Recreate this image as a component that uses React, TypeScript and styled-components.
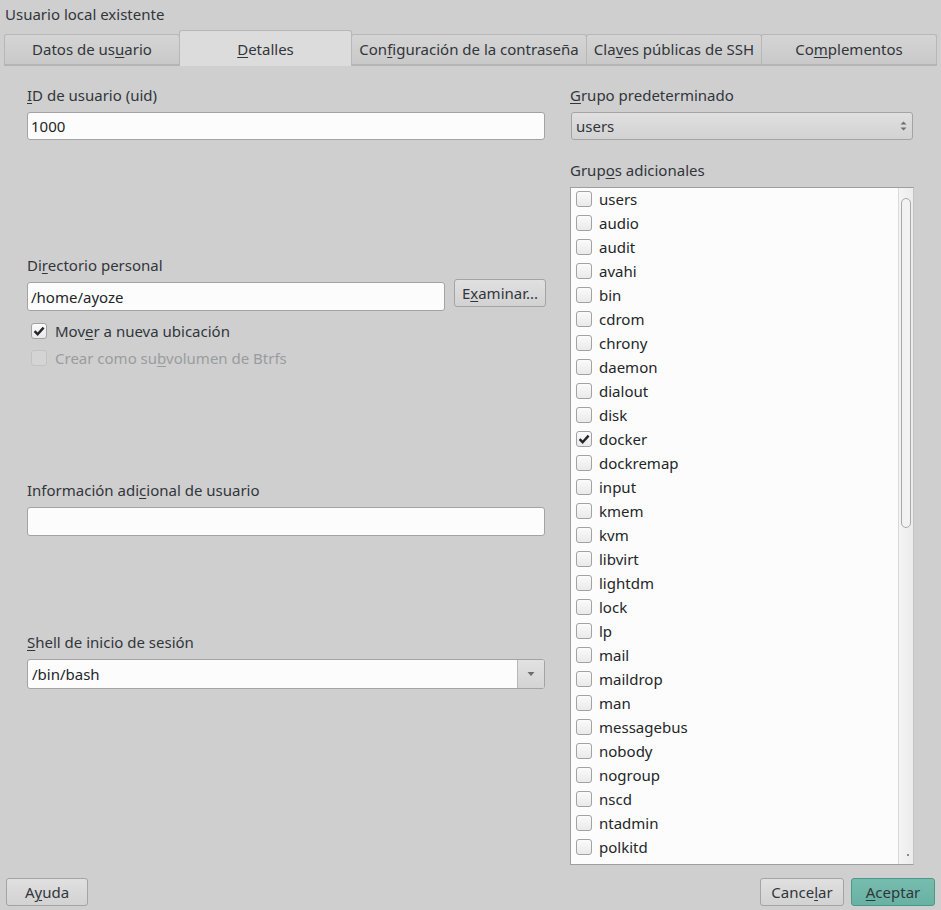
import React from 'react'
import styled, { createGlobalStyle } from 'styled-components'

const GlobalStyle = createGlobalStyle`
  html, body {
    margin: 0;
    padding: 0;
    background: #cfcfcf;
  }
  body {
    font-family: 'Noto Sans', 'Open Sans', sans-serif;
    font-size: 15px;
    color: #31363b;
  }
  * {
    box-sizing: border-box;
  }
`

const tabs = [
  { label: ['Datos de us', 'u', 'ario'], width: 176 },
  { label: ['', 'D', 'etalles'], width: 173, active: true },
  { label: ['Con', 'f', 'iguración de la contraseña'], width: 236 },
  { label: ['Cla', 'v', 'es públicas de SSH'], width: 176 },
  { label: ['Co', 'm', 'plementos'], width: 176 },
]

const groups = [
  'users', 'audio', 'audit', 'avahi', 'bin', 'cdrom', 'chrony', 'daemon',
  'dialout', 'disk', 'docker', 'dockremap', 'input', 'kmem', 'kvm', 'libvirt',
  'lightdm', 'lock', 'lp', 'mail', 'maildrop', 'man', 'messagebus', 'nobody',
  'nogroup', 'nscd', 'ntadmin', 'polkitd',
]

const checkMark = (
  <svg width="12" height="12" viewBox="0 0 12 12">
    <path d="M1.6 6.2 L4.6 9.2 L10.6 2.6" fill="none" stroke="#232629" strokeWidth="2.4" />
  </svg>
)

function Mn({ parts }: { parts: string[] }) {
  return (
    <>
      {parts[0]}
      <u>{parts[1]}</u>
      {parts[2]}
    </>
  )
}

function App() {
  return (
    <Window>
      <GlobalStyle />
      <Title>Usuario local existente</Title>
      <TabBar>
        {tabs.map((t) => (
          <Tab key={t.width + t.label[2]} $width={t.width} $active={!!t.active}>
            <Mn parts={t.label} />
          </Tab>
        ))}
      </TabBar>
      <Content>
        <LeftColumn>
          <Label $top={19}>
            <Mn parts={['', 'I', 'D de usuario (uid)']} />
          </Label>
          <TextInput $height={28}>1000</TextInput>

          <Label $top={115}>
            <Mn parts={['Di', 'r', 'ectorio personal']} />
          </Label>
          <InputRow>
            <TextInput $height={29} $grow>/home/ayoze</TextInput>
            <PushButton $width={92} $lift>
              <Mn parts={['E', 'x', 'aminar...']} />
            </PushButton>
          </InputRow>
          <CheckRow $top={10}>
            <CheckBox $checked>{checkMark}</CheckBox>
            <span>
              <Mn parts={['Mov', 'e', 'r a nueva ubicación']} />
            </span>
          </CheckRow>
          <CheckRow $top={7} $disabled>
            <CheckBox $disabled />
            <span>
              <Mn parts={['Crear como su', 'b', 'volumen de Btrfs']} />
            </span>
          </CheckRow>

          <Label $top={112}>
            <Mn parts={['Información adi', 'c', 'ional de usuario']} />
          </Label>
          <TextInput $height={29} />

          <Label $top={96}>
            <Mn parts={['', 'S', 'hell de inicio de sesión']} />
          </Label>
          <ComboEdit>
            <ComboText>/bin/bash</ComboText>
            <ComboArrow>
              <svg width="8" height="6" viewBox="0 0 8 6">
                <path d="M0.5 1 L7.5 1 L4 5 Z" fill="#6a6e72" />
              </svg>
            </ComboArrow>
          </ComboEdit>
        </LeftColumn>

        <RightColumn>
          <Label $top={19}>
            <Mn parts={['', 'G', 'rupo predeterminado']} />
          </Label>
          <SelectBox>
            <span>users</span>
            <svg width="7" height="12" viewBox="0 0 7 12">
              <path d="M0.5 4.5 L3.5 1.5 L6.5 4.5 Z" fill="#6a6e72" />
              <path d="M0.5 7.5 L3.5 10.5 L6.5 7.5 Z" fill="#6a6e72" />
            </svg>
          </SelectBox>
          <Label $top={20}>
            <Mn parts={['Grup', 'o', 's adicionales']} />
          </Label>
          <ListBox>
            <ListItems>
              {groups.map((g) => (
                <ListRow key={g}>
                  <CheckBox $checked={g === 'docker'}>
                    {g === 'docker' && checkMark}
                  </CheckBox>
                  <span>{g}</span>
                </ListRow>
              ))}
            </ListItems>
            <ScrollTrack>
              <ScrollThumb />
              <Grip />
            </ScrollTrack>
          </ListBox>
        </RightColumn>
      </Content>
      <Footer>
        <PushButton $width={82}>
          <Mn parts={['A', 'y', 'uda']} />
        </PushButton>
        <FooterRight>
          <PushButton $width={84}>
            <Mn parts={['Cance', 'l', 'ar']} />
          </PushButton>
          <PushButton $width={84} $primary>
            <Mn parts={['', 'A', 'ceptar']} />
          </PushButton>
        </FooterRight>
      </Footer>
    </Window>
  )
}

const Window = styled.div`
  width: 941px;
  height: 910px;
  display: flex;
  flex-direction: column;
  background: #cfcfcf;
  overflow: hidden;
  u {
    text-decoration-thickness: 1px;
    text-underline-offset: 2px;
  }
`

const Title = styled.div`
  height: 31px;
  padding: 4px 0 0 5px;
  line-height: 20px;
  color: #31363b;
`

const TabBar = styled.div`
  display: flex;
  align-items: flex-end;
  height: 35px;
  margin: 0 4px 0 4px;
  border-bottom: 1px solid #b4b4b4;
`

const Tab = styled.div<{ $width: number; $active: boolean }>`
  width: ${(p) => p.$width}px;
  height: ${(p) => (p.$active ? 36 : 31)}px;
  margin-bottom: ${(p) => (p.$active ? -1 : 0)}px;
  display: flex;
  align-items: center;
  justify-content: center;
  padding-bottom: ${(p) => (p.$active ? 0 : 1)}px;
  white-space: nowrap;
  border: 1px solid #b7b7b7;
  border-bottom: ${(p) => (p.$active ? 'none' : '1px solid #b4b4b4')};
  border-radius: 3px 3px 0 0;
  background: ${(p) =>
    p.$active ? '#dcdcdc' : 'linear-gradient(#d5d5d5, #c9c9c9)'};
  margin-left: -1px;
  &:first-child {
    margin-left: 0;
  }
`

const Content = styled.div`
  flex: 1;
  display: flex;
  padding-left: 27px;
  gap: 25px;
`

const LeftColumn = styled.div`
  width: 518px;
  display: flex;
  flex-direction: column;
`

const RightColumn = styled.div`
  width: 344px;
  display: flex;
  flex-direction: column;
`

const Label = styled.div<{ $top: number }>`
  margin-top: ${(p) => p.$top}px;
  line-height: 20px;
  height: 20px;
  margin-bottom: 7px;
  white-space: nowrap;
`

const TextInput = styled.div<{ $height: number; $grow?: boolean }>`
  flex: ${(p) => (p.$grow ? '1' : '0 0 auto')};
  width: ${(p) => (p.$grow ? 'auto' : '100%')};
  height: ${(p) => p.$height}px;
  background: #fcfcfc;
  border: 1px solid #a3a3a3;
  border-radius: 3px;
  padding: 0 3px;
  display: flex;
  align-items: center;
  color: #232629;
`

const InputRow = styled.div`
  display: flex;
  align-items: flex-start;
  gap: 9px;
  width: 519px;
`

const PushButton = styled.div<{ $width: number; $primary?: boolean; $lift?: boolean }>`
  width: ${(p) => p.$width}px;
  min-width: ${(p) => p.$width}px;
  height: 28px;
  margin-top: ${(p) => (p.$lift ? -3 : 0)}px;
  display: flex;
  align-items: center;
  justify-content: center;
  white-space: nowrap;
  border-radius: 3px;
  border: 1px solid ${(p) => (p.$primary ? '#4b9889' : '#a4a4a4')};
  background: ${(p) =>
    p.$primary
      ? 'linear-gradient(#77bcae, #68b2a3)'
      : 'linear-gradient(#e0e0e0, #d2d2d2)'};
  color: #31363b;
`

const CheckRow = styled.div<{ $top: number; $disabled?: boolean }>`
  margin-top: ${(p) => p.$top}px;
  height: 20px;
  display: flex;
  align-items: center;
  gap: 8px;
  padding-left: 4px;
  color: ${(p) => (p.$disabled ? '#9a9c9e' : '#31363b')};
`

const CheckBox = styled.div<{ $checked?: boolean; $disabled?: boolean }>`
  width: 16px;
  height: 16px;
  flex-shrink: 0;
  border-radius: 3px;
  border: 1px solid ${(p) => (p.$disabled ? '#c2c2c2' : '#a2a2a2')};
  background: ${(p) =>
    p.$disabled ? '#d4d4d4' : 'linear-gradient(#fbfbfb, #e9e9e9)'};
  display: flex;
  align-items: center;
  justify-content: center;
`

const ComboEdit = styled.div`
  height: 30px;
  display: flex;
  background: #fcfcfc;
  border: 1px solid #a3a3a3;
  border-radius: 3px;
  overflow: hidden;
`

const ComboText = styled.div`
  flex: 1;
  display: flex;
  align-items: center;
  padding-left: 4px;
  color: #232629;
`

const ComboArrow = styled.div`
  width: 27px;
  display: flex;
  align-items: center;
  justify-content: center;
  border-left: 1px solid #b8b8b8;
  background: linear-gradient(#e2e2e2, #d4d4d4);
`

const SelectBox = styled.div`
  height: 28px;
  margin-left: 1px;
  width: 342px;
  display: flex;
  align-items: center;
  justify-content: space-between;
  padding: 0 5px 0 4px;
  border: 1px solid #a4a4a4;
  border-radius: 3px;
  background: linear-gradient(#e0e0e0, #d2d2d2);
`

const ListBox = styled.div`
  height: 678px;
  display: flex;
  background: #fcfcfc;
  border: 1px solid #9f9f9f;
  border-right-color: #c4c4c4;
  overflow: hidden;
`

const ListItems = styled.div`
  flex: 1;
  display: flex;
  flex-direction: column;
  padding-left: 5px;
  margin-top: -1px;
`

const ListRow = styled.div`
  height: 24px;
  min-height: 24px;
  display: flex;
  align-items: center;
  gap: 7px;
  color: #232629;
`

const ScrollTrack = styled.div`
  position: relative;
  width: 15px;
  border-left: 1px solid #dadada;
  background: linear-gradient(90deg, #f4f4f4, #ececec);
  padding: 10px 2px 0 2px;
`

const ScrollThumb = styled.div`
  height: 330px;
  border: 1px solid #a8a8a8;
  border-radius: 5px;
  background: #f2f2f2;
`

const Grip = styled.div`
  position: absolute;
  right: 4px;
  bottom: 8px;
  width: 2px;
  height: 2px;
  background: #8a8a8a;
`

const Footer = styled.div`
  display: flex;
  justify-content: space-between;
  padding: 0 6px 4px 6px;
  height: 44px;
  align-items: flex-end;
`

const FooterRight = styled.div`
  display: flex;
  gap: 7px;
`

export default App
